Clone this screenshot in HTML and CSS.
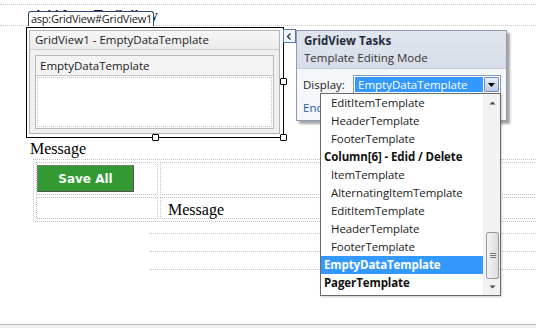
FILE: index.html
```html
<!DOCTYPE html>
<html>
<head>
<meta charset="utf-8">
<link rel="stylesheet" href="styles.css">
</head>
<body>
<div class="page">
  <div class="surface">
    <div class="heading">Add Item To Gallery</div>
    <div class="sel">
      <div class="gv">
        <div class="gv-head">GridView1 - EmptyDataTemplate</div>
        <div class="gv-body">
          <div class="edt">
            <div class="edt-head">EmptyDataTemplate</div>
            <div class="edt-body"></div>
          </div>
        </div>
      </div>
      <span class="handle h-rm"></span>
      <span class="handle h-bm"></span>
      <span class="handle h-br"></span>
    </div>
    <div class="msg">Message</div>
    <table class="layout">
      <tr>
        <td class="c1"><button class="save">Save All</button></td>
        <td class="c2"></td>
      </tr>
      <tr>
        <td class="c1"></td>
        <td class="c2 msg2">Message</td>
      </tr>
    </table>
    <div class="rows">
      <div class="row"></div>
      <div class="row"></div>
      <div class="row"></div>
    </div>
  </div>
  <div class="status"></div>

  <div class="tag">asp:GridView#GridView1</div>
  <div class="chev"><svg width="11" height="11" viewBox="0 0 11 11"><path d="M6.5 2.5 L3.5 5.5 L6.5 8.5" fill="none" stroke="#1c2e55" stroke-width="1.3"/></svg></div>

  <div class="tasks">
    <div class="tasks-head">
      <div class="tasks-title">GridView Tasks</div>
      <div class="tasks-sub">Template Editing Mode</div>
    </div>
    <div class="tasks-body">
      <div class="disp">
        <span class="disp-label">Display:</span>
        <div class="combo">
          <span class="combo-val">EmptyDataTemplate</span>
          <span class="combo-btn"><svg width="9" height="6" viewBox="0 0 9 6"><path d="M1 1 L8 1 L4.5 5 Z" fill="#000"/></svg></span>
        </div>
      </div>
      <div class="end-link">End Template Editing</div>
    </div>
  </div>

  <div class="list">
    <div class="items">
      <div class="item">EditItemTemplate</div>
      <div class="item">HeaderTemplate</div>
      <div class="item">FooterTemplate</div>
      <div class="item grp">Column[6] - Edid / Delete</div>
      <div class="item">ItemTemplate</div>
      <div class="item">AlternatingItemTemplate</div>
      <div class="item">EditItemTemplate</div>
      <div class="item">HeaderTemplate</div>
      <div class="item">FooterTemplate</div>
      <div class="item grp selected">EmptyDataTemplate</div>
      <div class="item grp">PagerTemplate</div>
    </div>
    <div class="sbar">
      <span class="sb-arrow"><svg width="7" height="4" viewBox="0 0 7 4"><path d="M0.5 3.5 L3.5 0.5 L6.5 3.5 Z" fill="#4a4a4a"/></svg></span>
      <span class="sb-track">
        <span class="sb-thumb"><span class="grip"></span><span class="grip"></span><span class="grip"></span></span>
      </span>
      <span class="sb-arrow"><svg width="7" height="4" viewBox="0 0 7 4"><path d="M0.5 0.5 L6.5 0.5 L3.5 3.5 Z" fill="#4a4a4a"/></svg></span>
    </div>
  </div>
</div>
</body>
</html>
```

FILE: styles.css
```css
* { box-sizing: border-box; }
html, body { margin: 0; padding: 0; background: #fff; }
body { width: 536px; height: 328px; overflow: hidden; }

.page {
  position: relative;
  width: 536px;
  height: 328px;
  overflow: hidden;
  display: flex;
  flex-direction: column;
  font-family: "Open Sans", "Noto Sans", sans-serif;
  font-size: 11px;
  color: #1e1e1e;
}

.surface { flex: 1; padding-top: 4px; }

.heading {
  border-top: 1px dotted #c8c8c8;
  border-bottom: 1px dotted #c8c8c8;
  height: 22px;
  padding-left: 33px;
  font-family: "Liberation Serif", serif;
  font-size: 15px;
  line-height: 20px;
  color: #000;
}

.sel {
  position: relative;
  margin: 1px 0 0 26px;
  width: 258px;
  border: 1px solid #000;
  padding: 2px 3px 3px 2px;
}
.gv {
  border: 1px solid #b4b4b4;
  background: #f0f0f0;
}
.gv-head {
  height: 19px;
  line-height: 17px;
  padding-left: 5px;
  border-bottom: 1px solid #cfcfcf;
  background: linear-gradient(#f7f7f7, #ebebeb);
  font-size: 11.5px;
  color: #222;
}
.gv-body { padding: 5px 5px 4px 5px; }
.edt {
  border: 1px solid #b9b9b9;
  background: #fff;
}
.edt-head {
  height: 20px;
  line-height: 19px;
  padding-left: 4px;
  background: #f3f3f3;
  border-bottom: 1px solid #c8c8c8;
  font-size: 11.5px;
  color: #222;
}
.edt-body {
  height: 50px;
  margin: 1px;
  border: 1px dotted #c4c4c4;
  background: #fff;
}

.handle {
  position: absolute;
  width: 7px;
  height: 7px;
  background: #fff;
  border: 1px solid #000;
  border-radius: 1px;
}
.h-rm { right: -4px; top: 50px; }
.h-bm { left: 125px; bottom: -4px; }
.h-br { right: -4px; bottom: -4px; }

.msg {
  height: 21px;
  padding: 2px 0 0 30px;
  font-family: "Liberation Serif", serif;
  font-size: 16px;
  line-height: 17px;
  color: #000;
}

.layout {
  margin-left: 33px;
  width: 515px;
  border: 1px dotted #c4c4c4;
  border-spacing: 2px;
}
.layout td {
  border: 1px dotted #c4c4c4;
  padding: 0;
  vertical-align: top;
}
.layout .c1 { width: 122px; padding: 2px 0 2px 0; }
.save {
  display: block;
  width: 97px;
  height: 27px;
  margin: 0;
  padding: 0;
  background: #339933;
  border: 1px solid #7a7a7a;
  border-right-color: #555;
  border-bottom-color: #555;
  color: #f4fff4;
  font-family: "DejaVu Sans", Verdana, sans-serif;
  font-weight: bold;
  font-size: 12px;
}
.msg2 {
  height: 22px;
  padding: 3px 0 0 7px !important;
  font-family: "Liberation Serif", serif;
  font-size: 16px;
  line-height: 17px;
  color: #000;
}

.rows { margin: 11px 0 0 150px; }
.row { height: 18px; border-top: 1px dotted #c8c8c8; }

.status {
  height: 4px;
  border-top: 1px solid #b8b8b8;
  background: #f0f0f0;
}

.tag {
  position: absolute;
  left: 28px;
  top: 11px;
  height: 15px;
  padding: 0 1px 0 2px;
  background: #fff;
  border: 1px solid #2e4577;
  border-bottom: none;
  border-radius: 3px 3px 0 0;
  font-size: 11px;
  letter-spacing: -0.25px;
  line-height: 13px;
  color: #1a1a1a;
}

.chev {
  position: absolute;
  left: 283px;
  top: 29px;
  width: 13px;
  height: 14px;
  border: 1px solid #5676b0;
  background: #f3f6fb;
  display: flex;
  align-items: center;
  justify-content: center;
}

.tasks {
  position: absolute;
  left: 296px;
  top: 30px;
  width: 211px;
  height: 91px;
  border: 1px solid #8e9bb3;
  background: #f5f7fa;
  box-shadow: 3px 3px 2px rgba(0,0,0,0.35);
}
.tasks-head {
  height: 38px;
  padding: 1px 0 0 7px;
  background: linear-gradient(#e1e6ee, #d7dde8);
  border-bottom: 1px solid #c2cad8;
}
.tasks-title { font-weight: bold; font-size: 11.5px; line-height: 17px; color: #1e2a3e; }
.tasks-sub { font-size: 11.5px; line-height: 17px; color: #333; }
.tasks-body { padding: 6px 0 0 6px; }
.disp { display: flex; align-items: center; }
.disp-label { width: 50px; font-size: 11.5px; color: #222; }
.combo {
  width: 148px;
  height: 19px;
  border: 1px solid #7f9db9;
  background: #fff;
  padding: 1px;
  display: flex;
}
.combo-val {
  flex: 1;
  background: #3399ff;
  color: #fff;
  font-size: 11.5px;
  line-height: 15px;
  padding-left: 3px;
}
.combo-btn {
  width: 15px;
  margin-left: 1px;
  border: 1px solid #7a8aa6;
  border-radius: 1px;
  background: linear-gradient(#e6eefc, #b9c9e6);
  display: flex;
  align-items: center;
  justify-content: center;
}
.end-link {
  margin-top: 6px;
  font-size: 11.5px;
  color: #1a5cb5;
}

.list {
  position: absolute;
  left: 320px;
  top: 93px;
  width: 181px;
  height: 203px;
  border: 1px solid #6a6a6a;
  background: #fff;
  display: flex;
  box-shadow: 1px 1px 2px rgba(0,0,0,0.2);
}
.items { flex: 1; }
.item {
  height: 18px;
  line-height: 18px;
  padding-left: 10px;
  font-size: 11.5px;
  letter-spacing: -0.1px;
  color: #222;
  white-space: nowrap;
}
.item.grp { padding-left: 3px; font-weight: bold; color: #111; }
.item.selected { background: #3399ff; color: #fff; }

.sbar {
  width: 17px;
  background: #f2f2f2;
  display: flex;
  flex-direction: column;
  border-left: 1px solid #f0f0f0;
}
.sb-arrow {
  height: 17px;
  display: flex;
  align-items: center;
  justify-content: center;
}
.sb-track { flex: 1; position: relative; }
.sb-thumb {
  position: absolute;
  left: 2px;
  right: 1px;
  top: 121px;
  height: 47px;
  border: 1px solid #9a9a9a;
  border-radius: 2px;
  background: linear-gradient(90deg, #f4f4f4, #dcdcdc);
  display: flex;
  flex-direction: column;
  align-items: center;
  justify-content: center;
  gap: 1px;
}
.grip { width: 6px; height: 1px; background: #7a7a7a; }
```
